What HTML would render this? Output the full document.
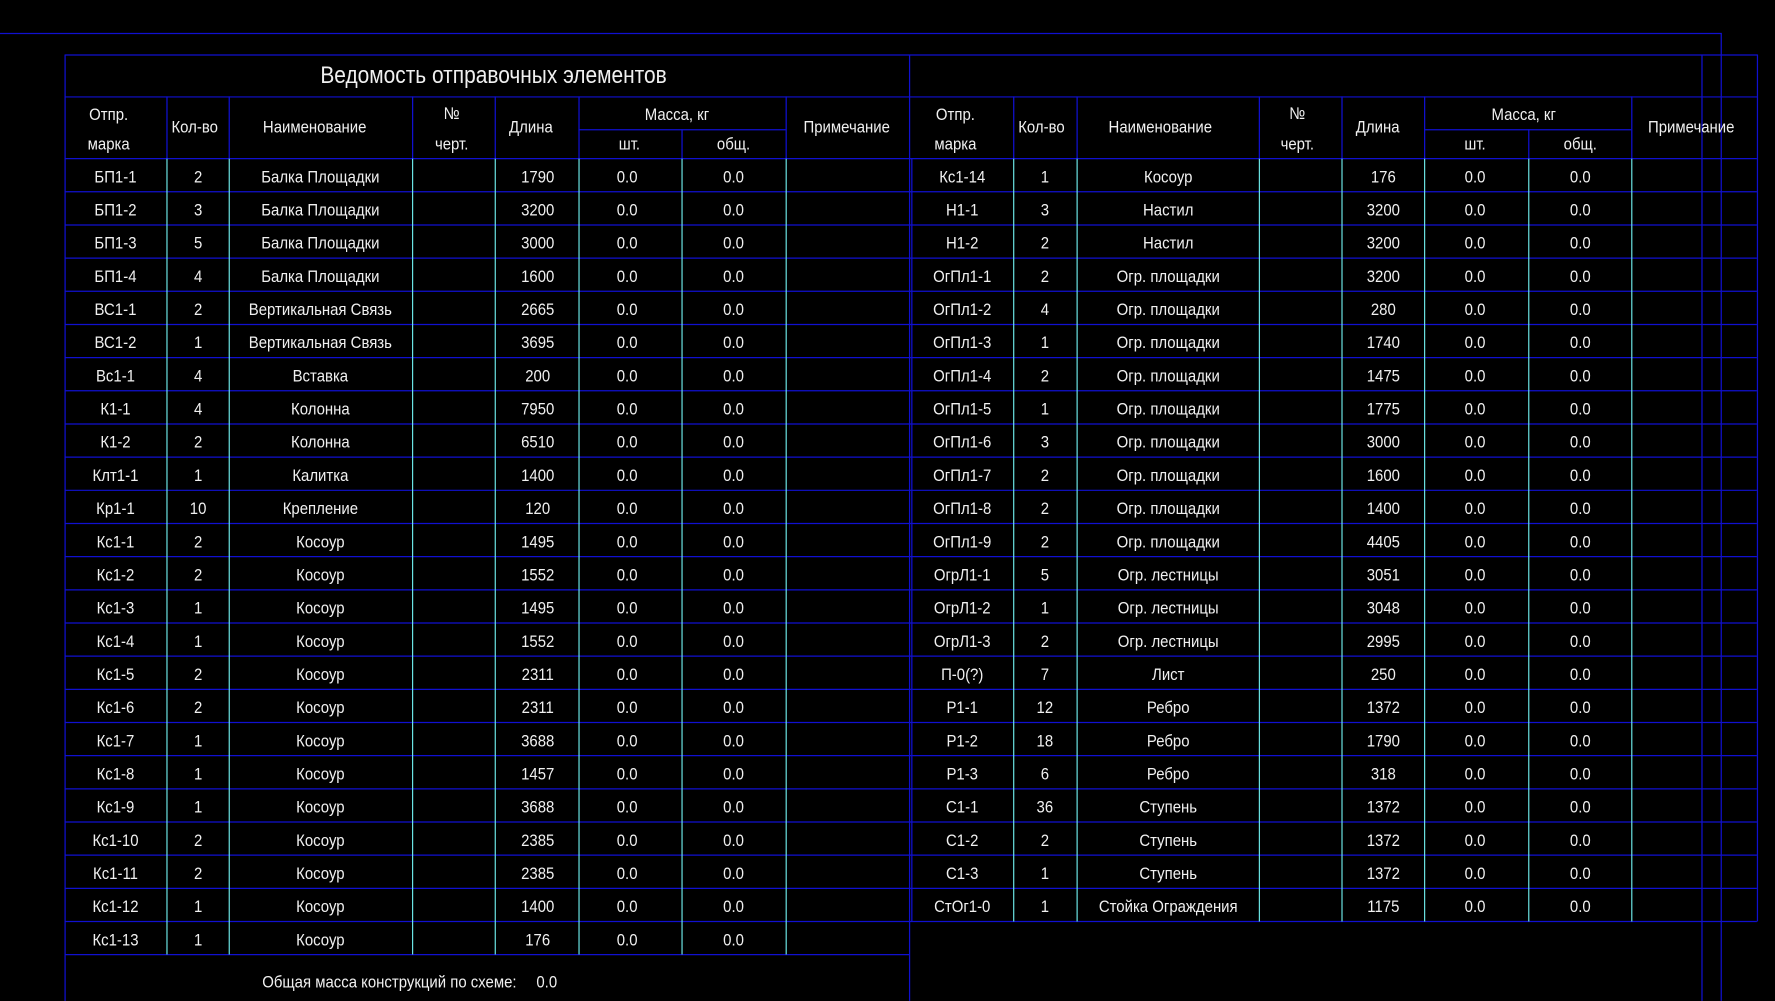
<!DOCTYPE html>
<html><head><meta charset="utf-8"><style>
html,body{margin:0;padding:0;background:#000;width:1775px;height:1001px;overflow:hidden}
svg{display:block}
text{fill:#f0f0f0;font-family:"Liberation Sans Narrow","Liberation Sans",sans-serif;font-size:15px;text-anchor:middle;transform-box:fill-box;transform-origin:center;transform:scaleX(0.88)}
.b{stroke:#1010d0;stroke-width:1.1;fill:none}
.c{stroke:#70f0f0;stroke-width:1;fill:none}
</style></head><body>
<svg width="1775" height="1001" viewBox="0 0 1568 884" xmlns="http://www.w3.org/2000/svg">
<path class="b" d="M0 29.5H1520.5V884M57.5 48.5H1552.5M57.5 85.5H1552.5M57.5 48V884M803.5 48V884M1503.5 48V884M1552.5 48V813.9M57 843.2H803M511 114.5H694M1258 114.5H1441"/>
<path class="b" d="M147.5 85V140M202.5 85V140M364.5 85V140M437.5 85V140M511.5 85V140M602.5 114V140M694.5 85V140M895.5 85V140M951.5 85V140M1112.5 85V140M1185.5 85V140M1258.5 85V140M1350.5 114V140M1441.5 85V140"/>
<path class="b" d="M57 140H1552M57 169.3H1552M57 198.6H1552M57 227.9H1552M57 257.2H1552M57 286.5H1552M57 315.8H1552M57 345.1H1552M57 374.4H1552M57 403.7H1552M57 433H1552M57 462.3H1552M57 491.6H1552M57 520.9H1552M57 550.2H1552M57 579.5H1552M57 608.8H1552M57 638.1H1552M57 667.4H1552M57 696.7H1552M57 726H1552M57 755.3H1552M57 784.6H1552M57 813.9H1552M805.5 140V813.9"/>
<path class="c" d="M147.5 140V843M202.5 140V843M364.5 140V843M437.5 140V843M511.5 140V843M602.5 140V843M694.5 140V843M895.5 140V813.9M951.5 140V813.9M1112.5 140V813.9M1185.5 140V813.9M1258.5 140V813.9M1350.5 140V813.9M1441.5 140V813.9"/>
<text x="436" y="73" style="font-size:21px">Ведомость отправочных элементов</text>
<text x="96" y="106">Отпр.</text><text x="96" y="132">марка</text><text x="172" y="117">Кол-во</text><text x="278" y="117">Наименование</text><text x="399" y="105">№</text><text x="399" y="132">черт.</text><text x="469" y="117">Длина</text><text x="598" y="106">Масса, кг</text><text x="556" y="132">шт.</text><text x="648" y="132">общ.</text><text x="748" y="117">Примечание</text>
<text x="844" y="106">Отпр.</text><text x="844" y="132">марка</text><text x="920" y="117">Кол-во</text><text x="1025" y="117">Наименование</text><text x="1146" y="105">№</text><text x="1146" y="132">черт.</text><text x="1217" y="117">Длина</text><text x="1346" y="106">Масса, кг</text><text x="1303" y="132">шт.</text><text x="1396" y="132">общ.</text><text x="1494" y="117">Примечание</text>
<g transform="translate(0,161)"><text x="102">БП1-1</text><text x="175">2</text><text x="283">Балка Площадки</text><text x="475">1790</text><text x="554">0.0</text><text x="648">0.0</text></g>
<g transform="translate(0,190.3)"><text x="102">БП1-2</text><text x="175">3</text><text x="283">Балка Площадки</text><text x="475">3200</text><text x="554">0.0</text><text x="648">0.0</text></g>
<g transform="translate(0,219.6)"><text x="102">БП1-3</text><text x="175">5</text><text x="283">Балка Площадки</text><text x="475">3000</text><text x="554">0.0</text><text x="648">0.0</text></g>
<g transform="translate(0,248.9)"><text x="102">БП1-4</text><text x="175">4</text><text x="283">Балка Площадки</text><text x="475">1600</text><text x="554">0.0</text><text x="648">0.0</text></g>
<g transform="translate(0,278.2)"><text x="102">ВС1-1</text><text x="175">2</text><text x="283">Вертикальная Связь</text><text x="475">2665</text><text x="554">0.0</text><text x="648">0.0</text></g>
<g transform="translate(0,307.5)"><text x="102">ВС1-2</text><text x="175">1</text><text x="283">Вертикальная Связь</text><text x="475">3695</text><text x="554">0.0</text><text x="648">0.0</text></g>
<g transform="translate(0,336.8)"><text x="102">Вс1-1</text><text x="175">4</text><text x="283">Вставка</text><text x="475">200</text><text x="554">0.0</text><text x="648">0.0</text></g>
<g transform="translate(0,366.1)"><text x="102">К1-1</text><text x="175">4</text><text x="283">Колонна</text><text x="475">7950</text><text x="554">0.0</text><text x="648">0.0</text></g>
<g transform="translate(0,395.4)"><text x="102">К1-2</text><text x="175">2</text><text x="283">Колонна</text><text x="475">6510</text><text x="554">0.0</text><text x="648">0.0</text></g>
<g transform="translate(0,424.7)"><text x="102">Клт1-1</text><text x="175">1</text><text x="283">Калитка</text><text x="475">1400</text><text x="554">0.0</text><text x="648">0.0</text></g>
<g transform="translate(0,454)"><text x="102">Кр1-1</text><text x="175">10</text><text x="283">Крепление</text><text x="475">120</text><text x="554">0.0</text><text x="648">0.0</text></g>
<g transform="translate(0,483.3)"><text x="102">Кс1-1</text><text x="175">2</text><text x="283">Косоур</text><text x="475">1495</text><text x="554">0.0</text><text x="648">0.0</text></g>
<g transform="translate(0,512.6)"><text x="102">Кс1-2</text><text x="175">2</text><text x="283">Косоур</text><text x="475">1552</text><text x="554">0.0</text><text x="648">0.0</text></g>
<g transform="translate(0,541.9)"><text x="102">Кс1-3</text><text x="175">1</text><text x="283">Косоур</text><text x="475">1495</text><text x="554">0.0</text><text x="648">0.0</text></g>
<g transform="translate(0,571.2)"><text x="102">Кс1-4</text><text x="175">1</text><text x="283">Косоур</text><text x="475">1552</text><text x="554">0.0</text><text x="648">0.0</text></g>
<g transform="translate(0,600.5)"><text x="102">Кс1-5</text><text x="175">2</text><text x="283">Косоур</text><text x="475">2311</text><text x="554">0.0</text><text x="648">0.0</text></g>
<g transform="translate(0,629.8)"><text x="102">Кс1-6</text><text x="175">2</text><text x="283">Косоур</text><text x="475">2311</text><text x="554">0.0</text><text x="648">0.0</text></g>
<g transform="translate(0,659.1)"><text x="102">Кс1-7</text><text x="175">1</text><text x="283">Косоур</text><text x="475">3688</text><text x="554">0.0</text><text x="648">0.0</text></g>
<g transform="translate(0,688.4)"><text x="102">Кс1-8</text><text x="175">1</text><text x="283">Косоур</text><text x="475">1457</text><text x="554">0.0</text><text x="648">0.0</text></g>
<g transform="translate(0,717.7)"><text x="102">Кс1-9</text><text x="175">1</text><text x="283">Косоур</text><text x="475">3688</text><text x="554">0.0</text><text x="648">0.0</text></g>
<g transform="translate(0,747)"><text x="102">Кс1-10</text><text x="175">2</text><text x="283">Косоур</text><text x="475">2385</text><text x="554">0.0</text><text x="648">0.0</text></g>
<g transform="translate(0,776.3)"><text x="102">Кс1-11</text><text x="175">2</text><text x="283">Косоур</text><text x="475">2385</text><text x="554">0.0</text><text x="648">0.0</text></g>
<g transform="translate(0,805.6)"><text x="102">Кс1-12</text><text x="175">1</text><text x="283">Косоур</text><text x="475">1400</text><text x="554">0.0</text><text x="648">0.0</text></g>
<g transform="translate(0,834.9)"><text x="102">Кс1-13</text><text x="175">1</text><text x="283">Косоур</text><text x="475">176</text><text x="554">0.0</text><text x="648">0.0</text></g>
<g transform="translate(0,161)"><text x="850">Кс1-14</text><text x="923">1</text><text x="1032">Косоур</text><text x="1222">176</text><text x="1303">0.0</text><text x="1396">0.0</text></g>
<g transform="translate(0,190.3)"><text x="850">Н1-1</text><text x="923">3</text><text x="1032">Настил</text><text x="1222">3200</text><text x="1303">0.0</text><text x="1396">0.0</text></g>
<g transform="translate(0,219.6)"><text x="850">Н1-2</text><text x="923">2</text><text x="1032">Настил</text><text x="1222">3200</text><text x="1303">0.0</text><text x="1396">0.0</text></g>
<g transform="translate(0,248.9)"><text x="850">ОгПл1-1</text><text x="923">2</text><text x="1032">Огр. площадки</text><text x="1222">3200</text><text x="1303">0.0</text><text x="1396">0.0</text></g>
<g transform="translate(0,278.2)"><text x="850">ОгПл1-2</text><text x="923">4</text><text x="1032">Огр. площадки</text><text x="1222">280</text><text x="1303">0.0</text><text x="1396">0.0</text></g>
<g transform="translate(0,307.5)"><text x="850">ОгПл1-3</text><text x="923">1</text><text x="1032">Огр. площадки</text><text x="1222">1740</text><text x="1303">0.0</text><text x="1396">0.0</text></g>
<g transform="translate(0,336.8)"><text x="850">ОгПл1-4</text><text x="923">2</text><text x="1032">Огр. площадки</text><text x="1222">1475</text><text x="1303">0.0</text><text x="1396">0.0</text></g>
<g transform="translate(0,366.1)"><text x="850">ОгПл1-5</text><text x="923">1</text><text x="1032">Огр. площадки</text><text x="1222">1775</text><text x="1303">0.0</text><text x="1396">0.0</text></g>
<g transform="translate(0,395.4)"><text x="850">ОгПл1-6</text><text x="923">3</text><text x="1032">Огр. площадки</text><text x="1222">3000</text><text x="1303">0.0</text><text x="1396">0.0</text></g>
<g transform="translate(0,424.7)"><text x="850">ОгПл1-7</text><text x="923">2</text><text x="1032">Огр. площадки</text><text x="1222">1600</text><text x="1303">0.0</text><text x="1396">0.0</text></g>
<g transform="translate(0,454)"><text x="850">ОгПл1-8</text><text x="923">2</text><text x="1032">Огр. площадки</text><text x="1222">1400</text><text x="1303">0.0</text><text x="1396">0.0</text></g>
<g transform="translate(0,483.3)"><text x="850">ОгПл1-9</text><text x="923">2</text><text x="1032">Огр. площадки</text><text x="1222">4405</text><text x="1303">0.0</text><text x="1396">0.0</text></g>
<g transform="translate(0,512.6)"><text x="850">ОгрЛ1-1</text><text x="923">5</text><text x="1032">Огр. лестницы</text><text x="1222">3051</text><text x="1303">0.0</text><text x="1396">0.0</text></g>
<g transform="translate(0,541.9)"><text x="850">ОгрЛ1-2</text><text x="923">1</text><text x="1032">Огр. лестницы</text><text x="1222">3048</text><text x="1303">0.0</text><text x="1396">0.0</text></g>
<g transform="translate(0,571.2)"><text x="850">ОгрЛ1-3</text><text x="923">2</text><text x="1032">Огр. лестницы</text><text x="1222">2995</text><text x="1303">0.0</text><text x="1396">0.0</text></g>
<g transform="translate(0,600.5)"><text x="850">П-0(?)</text><text x="923">7</text><text x="1032">Лист</text><text x="1222">250</text><text x="1303">0.0</text><text x="1396">0.0</text></g>
<g transform="translate(0,629.8)"><text x="850">Р1-1</text><text x="923">12</text><text x="1032">Ребро</text><text x="1222">1372</text><text x="1303">0.0</text><text x="1396">0.0</text></g>
<g transform="translate(0,659.1)"><text x="850">Р1-2</text><text x="923">18</text><text x="1032">Ребро</text><text x="1222">1790</text><text x="1303">0.0</text><text x="1396">0.0</text></g>
<g transform="translate(0,688.4)"><text x="850">Р1-3</text><text x="923">6</text><text x="1032">Ребро</text><text x="1222">318</text><text x="1303">0.0</text><text x="1396">0.0</text></g>
<g transform="translate(0,717.7)"><text x="850">С1-1</text><text x="923">36</text><text x="1032">Ступень</text><text x="1222">1372</text><text x="1303">0.0</text><text x="1396">0.0</text></g>
<g transform="translate(0,747)"><text x="850">С1-2</text><text x="923">2</text><text x="1032">Ступень</text><text x="1222">1372</text><text x="1303">0.0</text><text x="1396">0.0</text></g>
<g transform="translate(0,776.3)"><text x="850">С1-3</text><text x="923">1</text><text x="1032">Ступень</text><text x="1222">1372</text><text x="1303">0.0</text><text x="1396">0.0</text></g>
<g transform="translate(0,805.6)"><text x="850">СтОг1-0</text><text x="923">1</text><text x="1032">Стойка Ограждения</text><text x="1222">1175</text><text x="1303">0.0</text><text x="1396">0.0</text></g>
<text x="344" y="872">Общая масса конструкций по схеме:</text>
<text x="483" y="872">0.0</text>
</svg>
</body></html>
